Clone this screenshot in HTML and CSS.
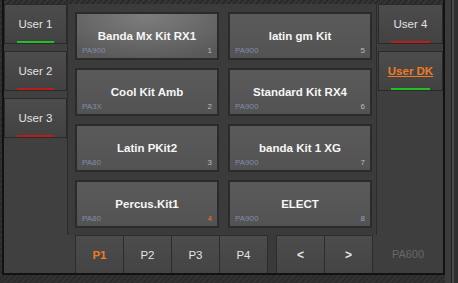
FILE: index.html
```html
<!DOCTYPE html>
<html>
<head>
<meta charset="utf-8">
<link rel="stylesheet" href="styles.css">
</head>
<body>
<div class="screen">
  <div class="frame">
    <div class="topstrip"></div>
    <div class="col-left">
      <div class="tab"><span>User 1</span><i class="bar green"></i></div>
      <div class="tab"><span>User 2</span><i class="bar red"></i></div>
      <div class="tab"><span>User 3</span><i class="bar red"></i></div>
    </div>
    <div class="panel">
      <div class="kits">
        <div class="kit sel"><div class="name">Banda Mx Kit RX1</div><div class="foot"><span class="src">PA900</span><span class="num">1</span></div></div>
        <div class="kit"><div class="name">Cool Kit Amb</div><div class="foot"><span class="src">PA3X</span><span class="num">2</span></div></div>
        <div class="kit"><div class="name">Latin PKit2</div><div class="foot"><span class="src">PA80</span><span class="num">3</span></div></div>
        <div class="kit"><div class="name">Percus.Kit1</div><div class="foot"><span class="src">PA80</span><span class="num orange">4</span></div></div>
        <div class="kit"><div class="name">latin gm Kit</div><div class="foot"><span class="src">PA900</span><span class="num">5</span></div></div>
        <div class="kit"><div class="name">Standard Kit RX4</div><div class="foot"><span class="src">PA900</span><span class="num">6</span></div></div>
        <div class="kit"><div class="name">banda Kit 1 XG</div><div class="foot"><span class="src">PA900</span><span class="num">7</span></div></div>
        <div class="kit"><div class="name">ELECT</div><div class="foot"><span class="src">PA900</span><span class="num blue">8</span></div></div>
      </div>
    </div>
    <div class="col-right">
      <div class="tab"><span>User 4</span><i class="bar red"></i></div>
      <div class="tab"><span class="dk">User DK</span><i class="bar green"></i></div>
    </div>
    <div class="nav">
      <div class="nbtn active">P1</div>
      <div class="nbtn">P2</div>
      <div class="nbtn">P3</div>
      <div class="nbtn">P4</div>
      <div class="nspace"></div>
      <div class="nbtn arrow">&lt;</div>
      <div class="nbtn arrow">&gt;</div>
      <div class="model">PA600</div>
    </div>
  </div>
  <div class="side"></div>
</div>
</body>
</html>
```

FILE: styles.css
```css
html, body {
  margin: 0;
  padding: 0;
}
body {
  width: 458px;
  height: 283px;
  overflow: hidden;
  background: #2f2f2f;
  font-family: "Liberation Sans", Arial, sans-serif;
}
.screen {
  display: flex;
  padding-left: 2px;
  height: 283px;
  background: repeating-linear-gradient(135deg, #2b2b2b 0 2px, #323232 2px 4px);
}
.frame {
  width: 439px;
  display: grid;
  grid-template-columns: 63px 310px 66px;
  grid-template-rows: 4px 231px 38px;
  border-left: 2px solid #121212;
  border-right: 2px solid #121212;
  border-bottom: 2px solid #121212;
  height: 273px;
  background: #404040;
}
.topstrip {
  grid-column: 1 / 4;
  grid-row: 1;
  background: repeating-linear-gradient(135deg, #2a2a2a 0 2px, #353535 2px 4px);
}
.col-left {
  grid-column: 1;
  grid-row: 2 / 4;
  display: flex;
  flex-direction: column;
  gap: 7px;
  background: #404040;
}
.tab {
  height: 40px;
  box-sizing: border-box;
  border: 1px solid #2a2a2a;
  background: linear-gradient(#4c4c4c, #424242);
  position: relative;
  display: flex;
  align-items: center;
  justify-content: center;
  color: #e2e2e2;
  font-size: 11.5px;
}
.bar {
  position: absolute;
  left: 12px;
  right: 12px;
  bottom: 0;
  height: 2px;
  display: block;
}
.bar.green { background: #22c022; }
.bar.red { background: #b81e1e; }
.dk {
  color: #f07a22;
  font-weight: bold;
  text-decoration: underline;
}
.panel {
  grid-column: 2;
  grid-row: 2;
  background: #3b3b3b;
  border-left: 1px solid #2b2b2b;
  border-right: 1px solid #2b2b2b;
  padding: 8px 4px 7px 7px;
}
.kits {
  display: grid;
  grid-template-columns: 144px 144px;
  grid-template-rows: repeat(4, 48px);
  grid-auto-flow: column;
  column-gap: 9px;
  row-gap: 8px;
}
.kit {
  box-sizing: border-box;
  border: 2px solid #2b2b2b;
  background: linear-gradient(#5a5a5a, #535353);
  display: flex;
  flex-direction: column;
}
.kit.sel {
  background: radial-gradient(ellipse 75% 110% at 50% 0%, #7e7e7e, #6a6a6a 55%, #585858 100%);
}
.name {
  flex: 1;
  display: flex;
  align-items: flex-end;
  justify-content: center;
  padding-bottom: 5px;
  color: #f6f6f6;
  font-weight: bold;
  font-size: 11.5px;
}
.foot {
  display: flex;
  justify-content: space-between;
  padding: 0 5px 3px 5px;
  font-size: 8px;
  line-height: 8px;
}
.src { color: #7e8da4; }
.num { color: #b8bcc4; }
.num.orange { color: #e27a22; }
.num.blue { color: #8aa6d6; }
.col-right {
  grid-column: 3;
  grid-row: 2;
  display: flex;
  flex-direction: column;
  gap: 7px;
  padding-left: 1px;
  background: #3e3e3e;
}
.nav {
  grid-column: 2 / 4;
  grid-row: 3;
  display: flex;
  padding-left: 8px;
  background: #404040;
}
.nbtn {
  width: 48px;
  box-sizing: border-box;
  border-left: 1px solid #2c2c2c;
  border-top: 1px solid #2c2c2c;
  background: linear-gradient(#4c4c4c, #444444);
  display: flex;
  align-items: center;
  justify-content: center;
  color: #e4e4e4;
  font-size: 11.5px;
}
.nbtn.active {
  color: #f07a22;
  font-weight: bold;
}
.nbtn.arrow {
  font-weight: bold;
  font-size: 12px;
}
.nspace {
  width: 8px;
  border-left: 1px solid #2c2c2c;
  background: #3a3a3a;
}
.model {
  flex: 1;
  display: flex;
  align-items: center;
  justify-content: center;
  border-left: 1px solid #2c2c2c;
  background: #3e3e3e;
  color: #676767;
  font-size: 11px;
}
.side {
  width: 13px;
  height: 283px;
  background: linear-gradient(90deg, #3b3b3b 0 6px, #222 6px 7px, #4a4a4a 7px 9px, #2f2f2f 9px);
}
```
